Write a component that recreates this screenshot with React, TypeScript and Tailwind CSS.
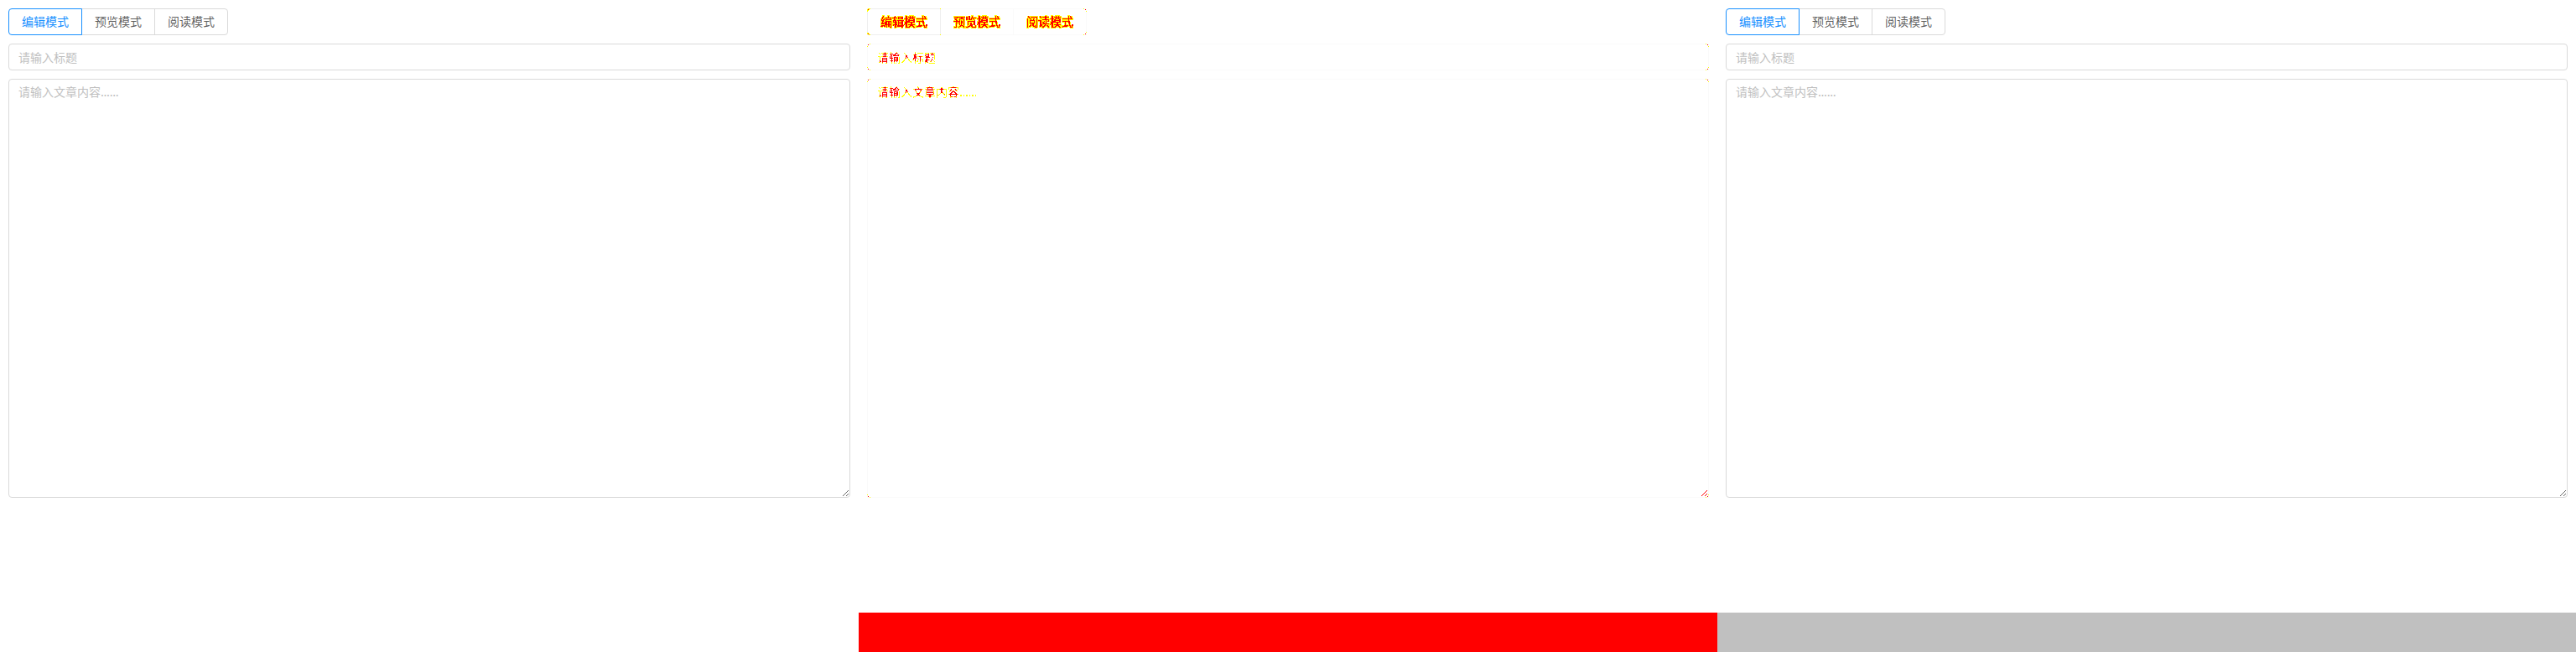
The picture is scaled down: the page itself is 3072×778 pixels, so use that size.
import React from "react";

const LABELS = ["编辑模式", "预览模式", "阅读模式"];

const FONT = "font-['Noto_Sans_CJK_SC','Liberation_Sans',sans-serif]";

function Grip({ color }: { color: string }) {
  const dots = [
    [0, 6], [1, 5], [2, 4], [3, 3], [4, 2], [5, 1], [6, 0],
    [4, 6], [5, 5], [6, 4],
  ];
  return (
    <svg className="absolute bottom-px right-px" width="7" height="7" shapeRendering="crispEdges">
      {dots.map(([x, y]) => (
        <rect key={`${x}-${y}`} x={x} y={y} width="1" height="1" fill={color} />
      ))}
    </svg>
  );
}

function Editor() {
  const tabs = [
    "z-10 rounded-l-[4px] border-[#1890ff] text-[#1890ff]",
    "-ml-px border-[#d9d9d9] text-[#000000a6]",
    "-ml-px rounded-r-[4px] border-[#d9d9d9] text-[#000000a6]",
  ];
  return (
    <section className="flex h-[731px] w-[1024px] flex-col gap-[10px] p-[10px]">
      <div className="flex">
        {LABELS.map((label, i) => (
          <div key={label} className={`relative h-8 border px-[15px] text-[14px] leading-[28px] ${tabs[i]}`}>
            {label}
          </div>
        ))}
      </div>
      <div className="h-8 rounded-[4px] border border-[#d9d9d9] px-[11px] text-[14px] leading-[31px] text-[#bfbfbf]">
        请输入标题
      </div>
      <div className="relative h-[500px] rounded-[4px] border border-[#d9d9d9] px-[11px] py-[4px] text-[14px] leading-[21px] text-[#bfbfbf]">
        请输入文章内容<span className="tracking-[-0.35px]">......</span>
        <Grip color="#666666" />
      </div>
    </section>
  );
}

type Dot = [string, string];

const CORNERS: Record<string, Dot[]> = {
  tl: [["left-0 top-[3px]", "y"], ["left-[1px] top-[1px]", "r"], ["left-[3px] top-0", "y"]],
  bl: [["left-0 bottom-[3px]", "y"], ["left-[1px] bottom-[1px]", "r"], ["left-[3px] bottom-0", "y"]],
  tr: [["right-[3px] top-0", "y"], ["right-[1px] top-[1px]", "r"], ["right-0 top-[3px]", "y"]],
  br: [["right-[3px] bottom-0", "y"], ["right-[1px] bottom-[1px]", "r"], ["right-0 bottom-[3px]", "y"]],
  tlBold: [["left-0 top-[1px]", "y"], ["left-0 top-[2px]", "y"], ["left-0 top-[3px]", "y"], ["left-[1px] top-[2px]", "y"], ["left-[2px] top-[1px]", "y"], ["left-[1px] top-0", "y"], ["left-[2px] top-0", "y"], ["left-[3px] top-0", "y"], ["left-[1px] top-[1px]", "r"]],
  blBold: [["left-0 bottom-[1px]", "y"], ["left-0 bottom-[2px]", "y"], ["left-[1px] bottom-[2px]", "y"], ["left-[2px] bottom-[1px]", "y"], ["left-[2px] bottom-0", "y"], ["left-[3px] bottom-0", "y"], ["left-[1px] bottom-[1px]", "r"]],
  edge: [["right-0 top-0", "y"], ["right-0 bottom-0", "y"]],
};

function Corners({ at }: { at: string[] }) {
  return (
    <>
      {at.flatMap((k) =>
        CORNERS[k].map(([pos, c]) => (
          <i key={k + pos} className={`absolute size-px ${pos} ${c === "r" ? "bg-[#ff0000]" : "bg-[#ffff00]"}`} />
        ))
      )}
    </>
  );
}

function DiffFilters() {
  return (
    <svg className="absolute size-0" aria-hidden="true">
      <filter id="diff-heavy" x="-5%" y="-10%" width="110%" height="120%" colorInterpolationFilters="sRGB">
        <feComponentTransfer in="SourceAlpha" result="ink">
          <feFuncA type="linear" slope="60" intercept="-32" />
        </feComponentTransfer>
        <feMorphology in="ink" operator="dilate" radius="1" result="wide" />
        <feGaussianBlur in="SourceAlpha" stdDeviation="0.7" result="b" />
        <feComponentTransfer in="b" result="core">
          <feFuncA type="linear" slope="60" intercept="-18" />
        </feComponentTransfer>
        <feFlood floodColor="#ffff00" result="fy" />
        <feFlood floodColor="#ff0000" result="fr" />
        <feComposite in="fy" in2="wide" operator="in" result="y" />
        <feComposite in="fr" in2="core" operator="in" result="r" />
        <feMerge><feMergeNode in="y" /><feMergeNode in="r" /></feMerge>
      </filter>
      <filter id="diff-light" x="-5%" y="-10%" width="110%" height="120%" colorInterpolationFilters="sRGB">
        <feComponentTransfer in="SourceAlpha" result="ink">
          <feFuncA type="linear" slope="60" intercept="-27" />
        </feComponentTransfer>
        <feGaussianBlur in="SourceAlpha" stdDeviation="1.5" result="b" />
        <feComponentTransfer in="b" result="dense">
          <feFuncA type="linear" slope="60" intercept="-20" />
        </feComponentTransfer>
        <feComposite in="ink" in2="dense" operator="in" result="core" />
        <feFlood floodColor="#ffff00" result="fy" />
        <feFlood floodColor="#ff0000" result="fr" />
        <feComposite in="fy" in2="ink" operator="in" result="y" />
        <feComposite in="fr" in2="core" operator="in" result="r" />
        <feMerge><feMergeNode in="y" /><feMergeNode in="r" /></feMerge>
      </filter>
    </svg>
  );
}

function DiffEditor() {
  const tabs = [
    "z-10 border-[#eeeeee]",
    "-ml-px border-[#fafafa]",
    "-ml-px border-[#fafafa]",
  ];
  const corners = [["tlBold", "blBold", "edge"], [], ["tr", "br"]];
  return (
    <section className="flex h-[731px] w-[1024px] flex-col gap-[10px] p-[10px]">
      <div className="flex">
        {LABELS.map((label, i) => (
          <div key={label} className={`relative h-8 border px-[15px] text-[14px] leading-[28px] ${tabs[i]}`}>
            <span className="block text-black [filter:url(#diff-heavy)]">{label}</span>
            <div className="absolute -inset-px"><Corners at={corners[i]} /></div>
          </div>
        ))}
      </div>
      <div className="relative h-8 border border-[#fafafa] px-[11px] text-[14px] leading-[31px]">
        <span className="block w-fit text-black [filter:url(#diff-light)]">请输入标题</span>
        <div className="absolute -inset-px"><Corners at={["tl", "bl", "tr", "br"]} /></div>
      </div>
      <div className="relative h-[500px] border border-[#fafafa] px-[11px] py-[4px] text-[14px] leading-[21px]">
        <span className="block w-fit text-black [filter:url(#diff-light)]">
          请输入文章内容<span className="tracking-[-0.35px]">......</span>
        </span>
        <div className="absolute -inset-px"><Corners at={["tl", "bl", "tr", "br"]} /></div>
        <Grip color="#ff0000" />
      </div>
    </section>
  );
}

export default function App() {
  return (
    <main className={`relative h-[778px] w-[3072px] overflow-hidden bg-white ${FONT}`}>
      <DiffFilters />
      <div className="flex">
        <Editor />
        <DiffEditor />
        <Editor />
      </div>
      <div className="flex h-[47px]">
        <div className="w-[1024px]" />
        <div className="w-[1024px] bg-[#ff0000]" />
        <div className="w-[1024px] bg-[#c0c0c0]" />
      </div>
    </main>
  );
}
